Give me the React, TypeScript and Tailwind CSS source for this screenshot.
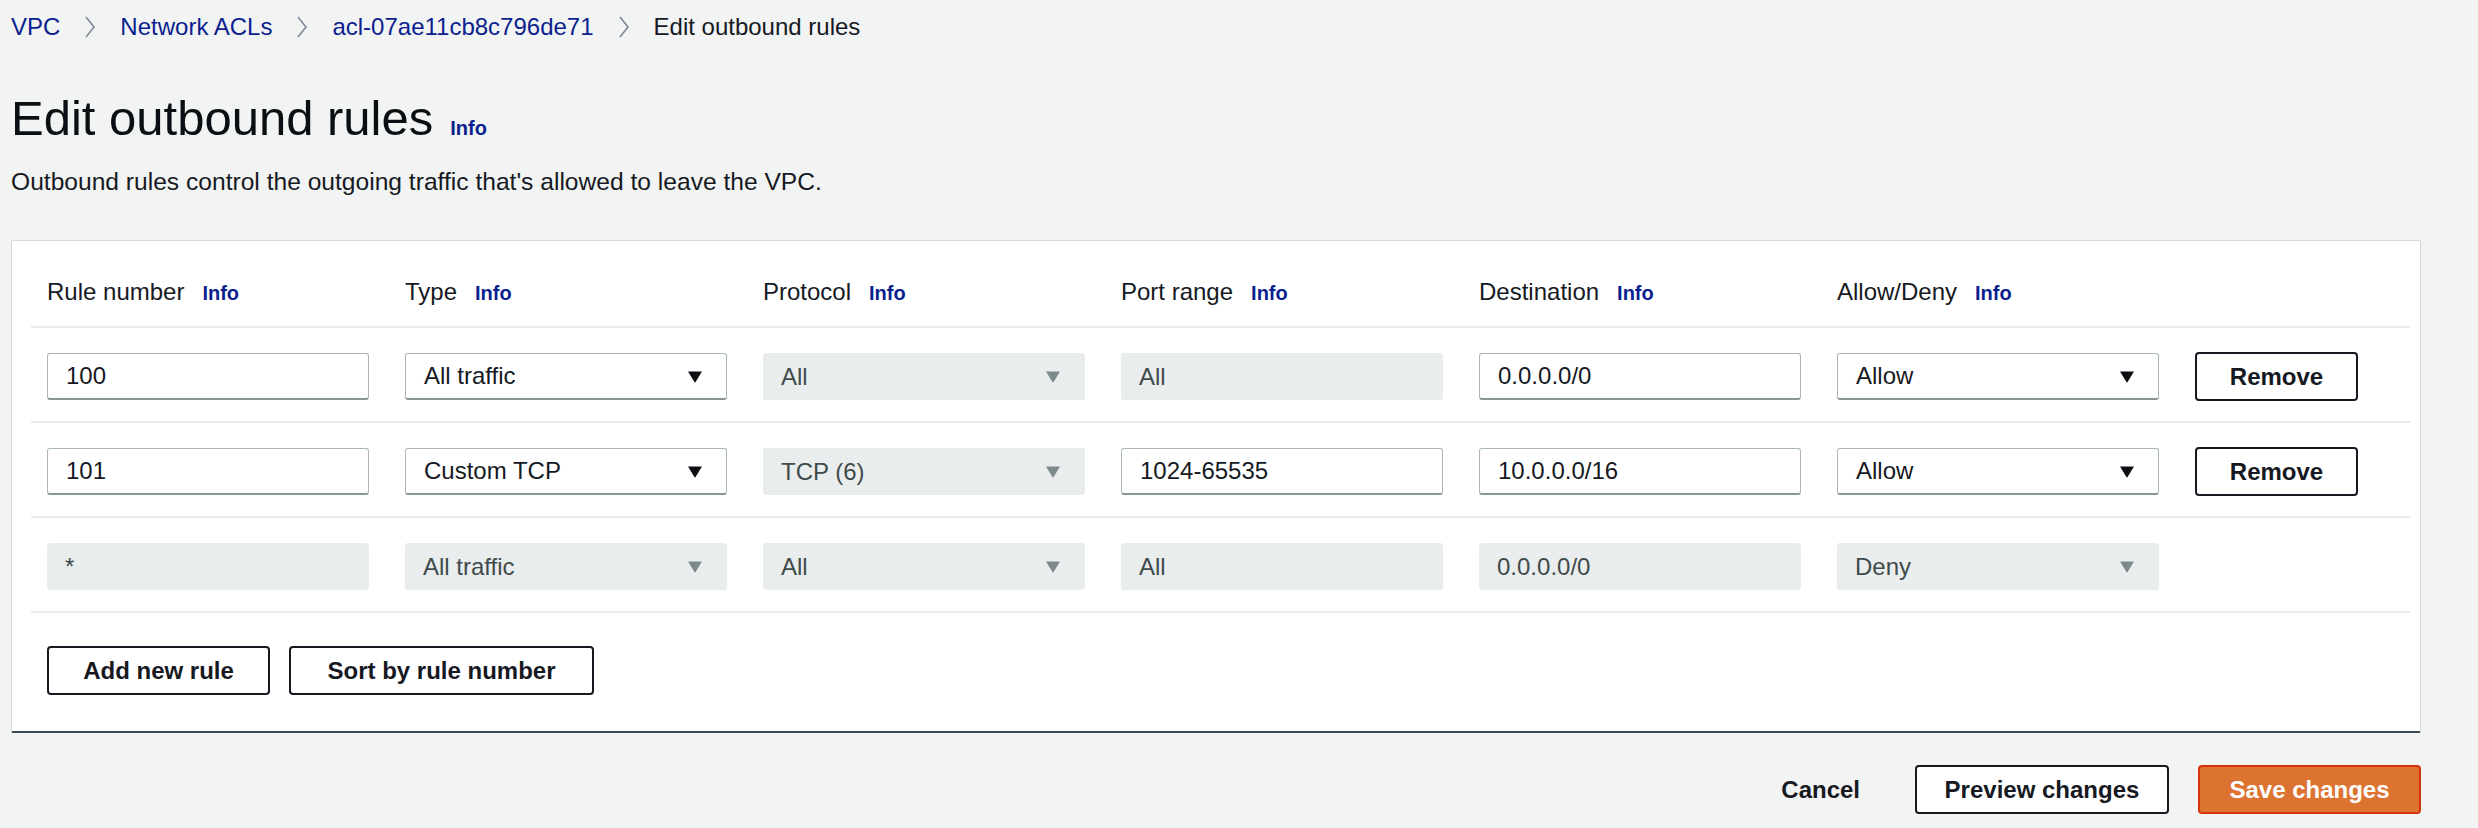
import React from "react";

const COLS = "grid grid-cols-[322px_322px_322px_322px_322px_322px_163px] gap-x-[36px] px-[16px]";

function Caret({ disabled }: { disabled?: boolean }) {
  return (
    <svg width="16" height="13" viewBox="0 0 16 13" className="shrink-0">
      <path d="M1 1.5 H15 L8.6 12 Q8 12.8 7.4 12 Z" fill={disabled ? "#7d8a8c" : "#0b0f14"} />
    </svg>
  );
}

function Chevron() {
  return (
    <svg width="12" height="24" viewBox="0 0 12 24" className="mx-[24px] shrink-0">
      <polyline points="2,2 10,12 2,22" fill="none" stroke="#7d8998" strokeWidth="1.6" />
    </svg>
  );
}

function Info() {
  return <span className="text-[20px] font-bold text-[#0b1f8f]">Info</span>;
}

function TextBox({ value, disabled }: { value: string; disabled?: boolean }) {
  if (disabled) {
    return (
      <div className="flex h-[47px] items-center rounded-[3px] bg-[#eaeded] px-[18px] text-[#3f4b4b]">
        {value}
      </div>
    );
  }
  return (
    <div className="flex h-[47px] items-center rounded-[3px] border border-[#aab7b8] border-b-2 border-b-[#8a9596] bg-white px-[18px]">
      {value}
    </div>
  );
}

function SelectBox({ value, disabled }: { value: string; disabled?: boolean }) {
  if (disabled) {
    return (
      <div className="flex h-[47px] items-center justify-between rounded-[3px] bg-[#eaeded] pl-[18px] pr-[24px] text-[#3f4b4b]">
        <span>{value}</span>
        <Caret disabled />
      </div>
    );
  }
  return (
    <div className="flex h-[47px] items-center justify-between rounded-[3px] border border-[#aab7b8] border-b-2 border-b-[#8a9596] bg-white pl-[18px] pr-[23px]">
      <span>{value}</span>
      <Caret />
    </div>
  );
}

function Button({ children, className = "" }: { children: React.ReactNode; className?: string }) {
  return (
    <button
      className={
        "flex h-[49px] items-center justify-center rounded-[4px] border-2 border-[#16191f] bg-white font-bold text-[#16191f] " +
        className
      }
    >
      {children}
    </button>
  );
}

type Rule = {
  num: string;
  type: string;
  protocol: string;
  port: string;
  dest: string;
  action: string;
  locked?: boolean;
  portEditable?: boolean;
};

const rules: Rule[] = [
  { num: "100", type: "All traffic", protocol: "All", port: "All", dest: "0.0.0.0/0", action: "Allow" },
  { num: "101", type: "Custom TCP", protocol: "TCP (6)", port: "1024-65535", dest: "10.0.0.0/16", action: "Allow", portEditable: true },
  { num: "*", type: "All traffic", protocol: "All", port: "All", dest: "0.0.0.0/0", action: "Deny", locked: true },
];

const headers = ["Rule number", "Type", "Protocol", "Port range", "Destination", "Allow/Deny"];

export default function App() {
  return (
    <div className="min-h-[828px] w-full bg-[#f2f3f3] pt-[12px] font-['Liberation_Sans',Arial,sans-serif] text-[24px] text-[#16191f]">
      <div className="ml-[11px] w-[2410px]">
        {/* breadcrumb */}
        <nav className="flex h-[30px] items-center leading-[30px]">
          <span className="text-[#0b1f8f]">VPC</span>
          <Chevron />
          <span className="text-[#0b1f8f]">Network ACLs</span>
          <Chevron />
          <span className="text-[#0b1f8f]">acl-07ae11cb8c796de71</span>
          <Chevron />
          <span>Edit outbound rules</span>
        </nav>

        <div className="mt-[48px] flex h-[56px] items-baseline gap-[17px]">
          <h1 className="text-[49px] leading-[56px] font-normal text-[#0b0f14]">Edit outbound rules</h1>
          <Info />
        </div>

        <p className="mt-[21px] text-[24.6px] leading-[30px]">
          Outbound rules control the outgoing traffic that's allowed to leave the VPC.
        </p>

        {/* rules card */}
        <div className="mt-[43px] rounded-[2px] border border-[#d5dbdb] border-b-2 border-b-[#3d4954] bg-white">
          <div className="ml-[19px] mr-[10px]">
            <div className={COLS + " h-[87px] items-start border-b-2 border-[#e9ebed] pt-[36px] leading-[30px]"}>
              {headers.map((h) => (
                <div key={h} className="flex items-baseline gap-[18px]">
                  <span>{h}</span>
                  <Info />
                </div>
              ))}
              <div />
            </div>

            {rules.map((r, i) => (
              <div key={i} className={COLS + " h-[95px] items-center border-b-2 border-[#e9ebed] pt-[4px]"}>
                <TextBox value={r.num} disabled={r.locked} />
                <SelectBox value={r.type} disabled={r.locked} />
                <SelectBox value={r.protocol} disabled />
                <TextBox value={r.port} disabled={!r.portEditable} />
                <TextBox value={r.dest} disabled={r.locked} />
                <SelectBox value={r.action} disabled={r.locked} />
                {r.locked ? <div /> : <Button className="h-[48px]">Remove</Button>}
              </div>
            ))}

            <div className="flex gap-[19px] px-[16px] pb-[36px] pt-[33px]">
              <Button className="w-[223px]">Add new rule</Button>
              <Button className="w-[305px]">Sort by rule number</Button>
            </div>
          </div>
        </div>

        {/* footer actions */}
        <div className="mt-[32px] flex items-center justify-end">
          <button className="mr-[55px] font-bold">Cancel</button>
          <Button className="mr-[29px] w-[254px]">Preview changes</Button>
          <button className="flex h-[49px] w-[223px] items-center justify-center rounded-[4px] border-2 border-[#d6330c] bg-[#dc7330] font-bold text-white">
            Save changes
          </button>
        </div>
      </div>
    </div>
  );
}
